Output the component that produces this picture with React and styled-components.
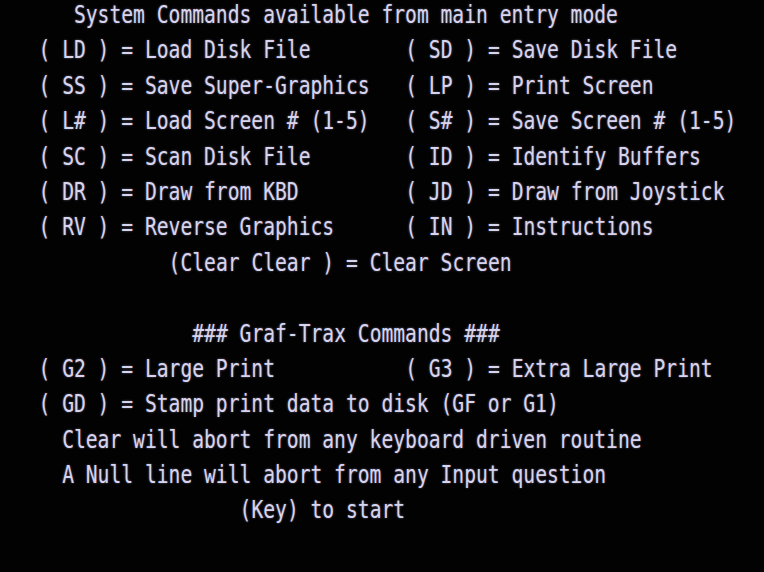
import React from 'react';
import styled, { createGlobalStyle } from 'styled-components';

const CELL = 11.83;
const ROW = 35.4;

const GlobalStyle = createGlobalStyle`
    html, body {
        margin: 0;
        padding: 0;
        background: #000;
    }
`;

const Screen = styled.div`
    width: 764px;
    height: 572px;
    padding: 5px 0 0 3px;
    box-sizing: border-box;
    background: #020202;
    overflow: hidden;
    font-family: "DejaVu Sans Mono", "Liberation Mono", monospace;
    font-size: 19.65px;
    color: #d8d4ee;
    text-shadow: 0 0 2px rgba(190, 185, 235, 0.55);
`;

const Row = styled.div`
    height: ${ROW}px;
    line-height: 20px;
    white-space: pre;
    padding-left: ${p => (p.$indent || 0) * CELL}px;
    transform: scaleY(1.25);
    transform-origin: 50% 10px;
    display: grid;
    grid-template-columns: ${p => (p.$split ? `${p.$split * CELL}px auto` : 'auto')};
    align-content: start;
`;

const Cell = styled.span`
    white-space: pre;
`;

const pairs = [
    ['( LD ) = Load Disk File', '( SD ) = Save Disk File'],
    ['( SS ) = Save Super-Graphics', '( LP ) = Print Screen'],
    ['( L# ) = Load Screen # (1-5)', '( S# ) = Save Screen # (1-5)'],
    ['( SC ) = Scan Disk File', '( ID ) = Identify Buffers'],
    ['( DR ) = Draw from KBD', '( JD ) = Draw from Joystick'],
    ['( RV ) = Reverse Graphics', '( IN ) = Instructions'],
];

const CommandPair = ({ left, right }) => (
    <Row $indent={3} $split={31}>
        <Cell>{left}</Cell>
        <Cell>{right}</Cell>
    </Row>
);

export default function App() {
    return (
        <>
            <GlobalStyle />
            <Screen>
                <Row $indent={6}>System Commands available from main entry mode</Row>
                {pairs.map(([l, r]) => (
                    <CommandPair key={l} left={l} right={r} />
                ))}
                <Row $indent={14}>(Clear Clear ) = Clear Screen</Row>
                <Row />
                <Row $indent={16}>### Graf-Trax Commands ###</Row>
                <CommandPair left="( G2 ) = Large Print" right="( G3 ) = Extra Large Print" />
                <Row $indent={3}>( GD ) = Stamp print data to disk (GF or G1)</Row>
                <Row $indent={5}>Clear will abort from any keyboard driven routine</Row>
                <Row $indent={5}>A Null line will abort from any Input question</Row>
                <Row $indent={20}>(Key) to start</Row>
                <Row />
            </Screen>
        </>
    );
}
